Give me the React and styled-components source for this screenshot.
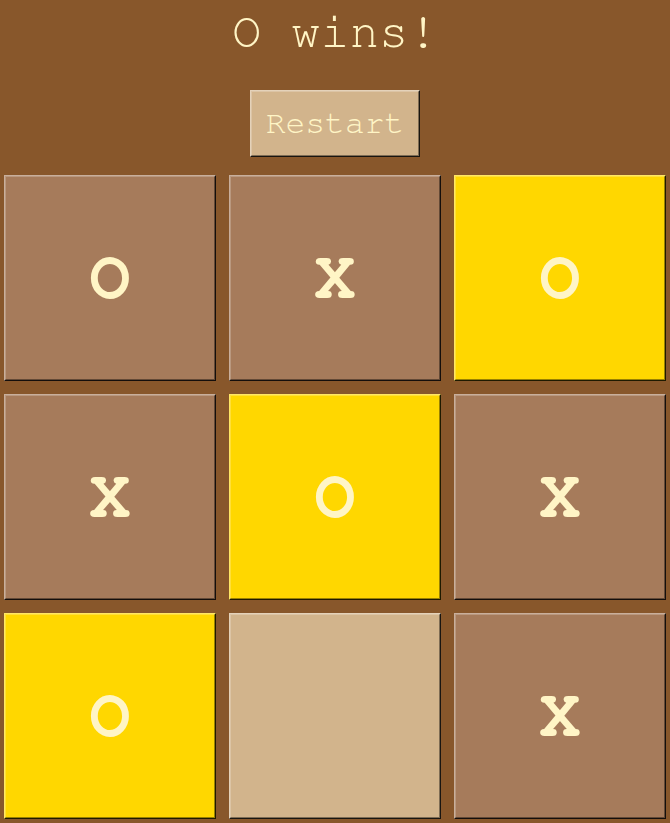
import React, { useState } from "react";
import styled, { createGlobalStyle, css } from "styled-components";

const GlobalStyle = createGlobalStyle`
  html, body {
    margin: 0;
    padding: 0;
    background: #88572b;
  }
  body {
    font-family: FreeMono, "Courier New", monospace;
  }
`;

const Page = styled.div`
  display: flex;
  flex-direction: column;
  align-items: center;
  width: 670px;
`;

const Status = styled.h1`
  margin: 6px 0 0;
  height: 56px;
  font-size: 49px;
  font-weight: normal;
  line-height: 54px;
  color: #fff5c6;
`;

const bevel = css`
  border: 1px solid;
  border-color: rgba(255, 255, 255, 0.4) rgba(0, 0, 0, 0.88) rgba(0, 0, 0, 0.88)
    rgba(255, 255, 255, 0.4);
  box-shadow: inset 1px 1px rgba(255, 255, 255, 0.22),
    inset -1px -1px rgba(0, 0, 0, 0.4);
`;

const RestartButton = styled.button`
  ${bevel};
  margin-top: 28px;
  width: 170px;
  height: 67px;
  padding: 0;
  background: #d2b48c;
  color: #fff5c6;
  font-family: inherit;
  font-size: 33px;
  cursor: pointer;
`;

const Board = styled.div`
  margin-top: 18px;
  display: grid;
  grid-template-columns: repeat(3, 212px);
  grid-auto-rows: 206px;
  gap: 13px;
`;

const cellColors = {
  empty: "#d2b48c",
  filled: "#a67b5b",
  win: "#ffd700",
};

const Cell = styled.button`
  ${bevel};
  box-sizing: border-box;
  padding: 0;
  background: ${(p) => cellColors[p.$tone]};
  color: #fff5c6;
  font-family: inherit;
  font-size: 68px;
  font-weight: bold;
  display: flex;
  align-items: center;
  justify-content: center;
  cursor: pointer;
`;

const initial = ["O", "X", "O", "X", "O", "X", "O", null, "X"];
const winLine = [2, 4, 6];

export default function App() {
  const [squares] = useState(initial);
  return (
    <>
      <GlobalStyle />
      <Page>
        <Status>O wins!</Status>
        <RestartButton>Restart</RestartButton>
        <Board>
          {squares.map((v, i) => (
            <Cell
              key={i}
              $tone={winLine.includes(i) ? "win" : v ? "filled" : "empty"}
            >
              {v}
            </Cell>
          ))}
        </Board>
      </Page>
    </>
  );
}
